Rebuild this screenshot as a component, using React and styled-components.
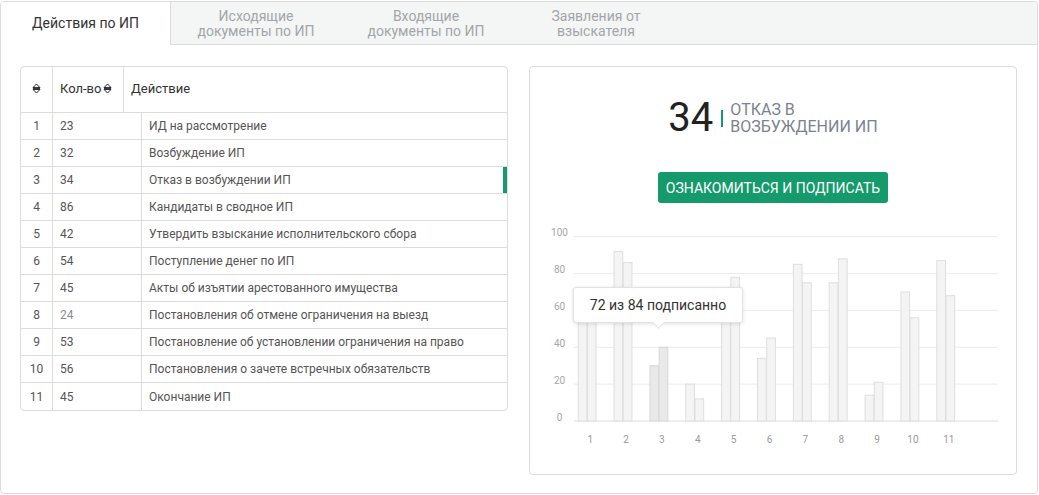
import React from 'react';
import styled, { createGlobalStyle } from 'styled-components';

const GlobalStyle = createGlobalStyle`
    body {
        margin: 0;
        background: #fff;
        font-family: Roboto, "Noto Sans", Arial, sans-serif;
    }
`;

const GREEN = '#159a6c';

const Frame = styled.div`
    box-sizing: border-box;
    width: 1038px;
    height: 493px;
    margin-top: 1px;
    border: 1px solid #dcdcdc;
    border-radius: 4px;
    overflow: hidden;
`;

const TabBar = styled.div`
    display: flex;
    box-sizing: border-box;
    height: 43px;
    background: #f4f5f5;
    border-bottom: 1px solid #dcdcdc;
`;

const Tab = styled.div`
    box-sizing: border-box;
    width: 170px;
    height: 43px;
    display: flex;
    align-items: center;
    justify-content: center;
    text-align: center;
    font-size: 14px;
    line-height: 15px;
    color: ${(p) => (p.$active ? '#333' : '#a3a6a9')};
    background: ${(p) => (p.$active ? '#fff' : 'transparent')};
    border-right: ${(p) => (p.$active ? '1px solid #dcdcdc' : 'none')};
    margin-bottom: ${(p) => (p.$active ? '-1px' : '0')};
`;

const Content = styled.div`
    display: grid;
    grid-template-columns: 488px 488px;
    column-gap: 21px;
    align-items: start;
    padding: 21px 0 0 19px;
`;

const Card = styled.div`
    box-sizing: border-box;
    border: 1px solid #dcdcdc;
    border-radius: 4px;
    background: #fff;
`;

const TableCard = styled(Card)`
    overflow: hidden;
`;

const HeadRow = styled.div`
    display: grid;
    grid-template-columns: 32px 71px 1fr;
    height: 46px;
    box-sizing: border-box;
    border-bottom: 1px solid #dcdcdc;
    font-size: 13px;
    color: #333;
`;

const HeadCell = styled.div`
    display: flex;
    align-items: center;
    justify-content: ${(p) => (p.$center ? 'center' : 'flex-start')};
    gap: 2px;
    padding-left: ${(p) => (p.$center ? '0' : '7px')};
    padding-bottom: 3px;
    border-right: ${(p) => (p.$last ? 'none' : '1px solid #dcdcdc')};
`;

const Row = styled.div`
    position: relative;
    display: grid;
    grid-template-columns: 32px 89px 1fr;
    height: 27px;
    box-sizing: border-box;
    border-bottom: ${(p) => (p.$last ? 'none' : '1px solid #dcdcdc')};
    font-size: 12px;
    color: #555;
`;

const Cell = styled.div`
    display: flex;
    align-items: center;
    justify-content: ${(p) => (p.$center ? 'center' : 'flex-start')};
    padding-left: ${(p) => (p.$center ? '0' : '7px')};
    border-right: ${(p) => (p.$last ? 'none' : '1px solid #dcdcdc')};
    color: ${(p) => p.$color || 'inherit'};
    white-space: nowrap;
`;

const ActiveMark = styled.span`
    position: absolute;
    right: 0;
    top: 0;
    bottom: 0;
    width: 4px;
    background: ${GREEN};
`;

const InfoCard = styled(Card)`
    height: 409px;
    display: flex;
    flex-direction: column;
    align-items: center;
    padding-top: 31px;
`;

const Summary = styled.div`
    display: flex;
    align-items: center;
    height: 40px;
`;

const BigNumber = styled.div`
    font-size: 40px;
    line-height: 40px;
    color: #222;
`;

const Divider = styled.span`
    width: 2px;
    height: 17px;
    margin: 0 7px 0 8px;
    background: ${GREEN};
`;

const Caption = styled.div`
    font-size: 16px;
    line-height: 17px;
    color: #7b8390;
    text-transform: uppercase;
`;

const Button = styled.button`
    margin-top: 34px;
    height: 31px;
    padding: 0 8px;
    border: none;
    border-radius: 3px;
    background: ${GREEN};
    color: #fff;
    font-family: inherit;
    font-size: 14px;
    text-transform: uppercase;
    cursor: pointer;
`;

const ChartWrap = styled.div`
    position: relative;
    align-self: stretch;
    margin-top: 22px;
    height: 225px;
`;

const Tooltip = styled.div`
    position: absolute;
    left: 43px;
    top: 62px;
    width: 170px;
    height: 36px;
    box-sizing: border-box;
    display: flex;
    align-items: center;
    justify-content: center;
    background: #fff;
    border: 1px solid #e2e2e2;
    border-radius: 3px;
    box-shadow: 0 1px 4px rgba(0, 0, 0, 0.12);
    font-size: 14px;
    color: #333;

    &::after {
        content: '';
        position: absolute;
        left: 80px;
        bottom: -5px;
        width: 8px;
        height: 8px;
        background: #fff;
        border-right: 1px solid #e2e2e2;
        border-bottom: 1px solid #e2e2e2;
        transform: rotate(45deg);
    }
`;

const SortIcon = () => (
    <svg width="9" height="11" viewBox="0 0 9 11">
        <path d="M1 4.6 L4.5 1 L8 4.6 Z M1 6.4 L4.5 10 L8 6.4 Z" fill="none" stroke="#222" strokeWidth="1" strokeLinejoin="round" />
        <path d="M1 5.5 H8" stroke="#222" strokeWidth="0.9" />
    </svg>
);

const actions = [
    [1, 23, 'ИД на рассмотрение'],
    [2, 32, 'Возбуждение ИП'],
    [3, 34, 'Отказ в возбуждении ИП'],
    [4, 86, 'Кандидаты в сводное ИП'],
    [5, 42, 'Утвердить взыскание исполнительского сбора'],
    [6, 54, 'Поступление денег по ИП'],
    [7, 45, 'Акты об изъятии арестованного имущества'],
    [8, 24, 'Постановления об отмене ограничения на выезд'],
    [9, 53, 'Постановление об установлении ограничения на право'],
    [10, 56, 'Постановления о зачете встречных обязательств'],
    [11, 45, 'Окончание ИП'],
];

const bars = [
    [60, 64], [92, 86], [30, 40], [20, 12], [62, 78], [34, 45],
    [85, 75], [75, 88], [14, 21], [70, 56], [87, 68],
];

const BASE = 196;
const SCALE = 1.843;
const yOf = (v) => BASE - v * SCALE;

const Chart = () => (
    <svg width="486" height="225" viewBox="0 0 486 225" fontFamily="Roboto, Arial, sans-serif">
        {[100, 80, 60, 40, 20, 0].map((v) => (
            <g key={v}>
                <line x1="44" x2="468" y1={yOf(v)} y2={yOf(v)} stroke={v === 0 ? '#dddddd' : '#ececec'} strokeWidth="1" />
                <text x="29.5" y={yOf(v) - 0.5} textAnchor="middle" fontSize="10" fill="#a6a6a6">{v}</text>
            </g>
        ))}
        {bars.map(([a, b], i) => {
            const s = 47.7 + i * 35.86;
            const sel = i === 2;
            const fill = sel ? '#e9e9e9' : '#f4f4f4';
            const stroke = sel ? '#d8d8d8' : '#dedede';
            return (
                <g key={i}>
                    <rect x={s + 0.5} y={yOf(a)} width="8.7" height={a * SCALE} fill={fill} stroke={stroke} strokeWidth="1" />
                    <rect x={s + 9.7} y={yOf(b)} width="8.7" height={b * SCALE} fill={fill} stroke={stroke} strokeWidth="1" />
                    <text x={s + 12.5} y="217.5" textAnchor="middle" fontSize="10" fill="#9a9a9a">{i + 1}</text>
                </g>
            );
        })}
    </svg>
);

const App = () => {
    return (
        <>
            <GlobalStyle />
            <Frame>
                <TabBar>
                    <Tab $active>Действия по ИП</Tab>
                    <Tab>Исходящие<br />документы по ИП</Tab>
                    <Tab>Входящие<br />документы по ИП</Tab>
                    <Tab>Заявления от<br />взыскателя</Tab>
                </TabBar>
                <Content>
                    <TableCard>
                        <HeadRow>
                            <HeadCell $center><SortIcon /></HeadCell>
                            <HeadCell>Кол-во<SortIcon /></HeadCell>
                            <HeadCell $last>Действие</HeadCell>
                        </HeadRow>
                        {actions.map(([n, count, text], i) => (
                            <Row key={n} $last={i === actions.length - 1}>
                                <Cell $center>{n}</Cell>
                                <Cell $color={n === 8 ? '#8c8c8c' : undefined}>{count}</Cell>
                                <Cell $last>{text}</Cell>
                                {n === 3 && <ActiveMark />}
                            </Row>
                        ))}
                    </TableCard>
                    <InfoCard>
                        <Summary>
                            <BigNumber>34</BigNumber>
                            <Divider />
                            <Caption>Отказ в<br />возбуждении ИП</Caption>
                        </Summary>
                        <Button>Ознакомиться и подписать</Button>
                        <ChartWrap>
                            <Chart />
                            <Tooltip>72 из 84 подписанно</Tooltip>
                        </ChartWrap>
                    </InfoCard>
                </Content>
            </Frame>
        </>
    );
};

export default App;
